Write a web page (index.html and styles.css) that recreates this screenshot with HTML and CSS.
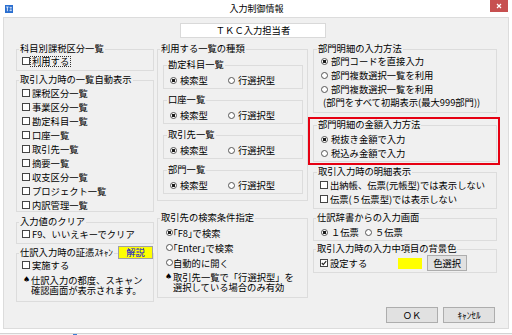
FILE: index.html
```html
<!DOCTYPE html>
<html lang="ja">
<head>
    <meta charset="UTF-8">
    <title>入力制御情報</title>
    <link rel="stylesheet" href="styles.css">
</head>
<body>
<div class="window">
    <div class="titlebar">
        <svg class="app-icon" width="8" height="8" viewBox="0 0 8 8">
            <rect width="8" height="8" fill="#2b6fd0"/>
            <path d="M1.2 2h2.4M2.4 2v4.2M4.6 2.4h2.2M4.9 4h1.8M4.6 5.6h2.2" stroke="#fff" stroke-width="0.8" fill="none"/>
        </svg>
        <div class="title">入力制御情報</div>
        <div class="close-btn">
            <svg width="6" height="6" viewBox="0 0 6 6"><path d="M1 1l4 4M5 1l-4 4" stroke="#fff" stroke-width="1.2"/></svg>
        </div>
    </div>

    <div class="client">
        <div class="user-box">ＴＫＣ入力担当者</div>

        <div class="columns">
            <!-- 左列 -->
            <div class="col col-left">
                <div class="group g-kamoku">
                    <div class="group-title">科目別課税区分一覧</div>
                    <div class="row pad-cb"><span class="cb"></span><span class="focus">利用する</span></div>
                </div>

                <div class="group g-auto">
                    <div class="group-title">取引入力時の一覧自動表示</div>
                    <div class="list">
                        <div class="row pad-cb"><span class="cb"></span>課税区分一覧</div>
                        <div class="row pad-cb"><span class="cb"></span>事業区分一覧</div>
                        <div class="row pad-cb"><span class="cb"></span>勘定科目一覧</div>
                        <div class="row pad-cb"><span class="cb"></span>口座一覧</div>
                        <div class="row pad-cb"><span class="cb"></span>取引先一覧</div>
                        <div class="row pad-cb"><span class="cb"></span>摘要一覧</div>
                        <div class="row pad-cb"><span class="cb"></span>収支区分一覧</div>
                        <div class="row pad-cb"><span class="cb"></span>プロジェクト一覧</div>
                        <div class="row pad-cb"><span class="cb"></span>内訳管理一覧</div>
                    </div>
                </div>

                <div class="group g-clear">
                    <div class="group-title">入力値のクリア</div>
                    <div class="row pad-cb"><span class="cb"></span>F9、いいえキーでクリア</div>
                </div>

                <div class="group g-scan">
                    <div class="group-head">
                        <span class="head-text">仕訳入力時の証憑ｽｷｬﾝ</span>
                        <span class="help-btn">解説</span>
                    </div>
                    <div class="row pad-cb"><span class="cb"></span>実施する</div>
                    <div class="note note-left">
                        <span class="spade">♠</span>
                        <span>仕訳入力の都度、スキャン<br>確認画面が表示されます。</span>
                    </div>
                </div>
            </div>

            <!-- 中央列 -->
            <div class="col col-mid">
                <div class="group g-lists">
                    <div class="group-title">利用する一覧の種類</div>
                    <div class="sub">
                        <div class="group-title">勘定科目一覧</div>
                        <div class="row pair"><span class="rb on"></span>検索型<span class="rb second"></span>行選択型</div>
                    </div>
                    <div class="sub">
                        <div class="group-title">口座一覧</div>
                        <div class="row pair"><span class="rb on"></span>検索型<span class="rb second"></span>行選択型</div>
                    </div>
                    <div class="sub">
                        <div class="group-title">取引先一覧</div>
                        <div class="row pair"><span class="rb on"></span>検索型<span class="rb second"></span>行選択型</div>
                    </div>
                    <div class="sub">
                        <div class="group-title">部門一覧</div>
                        <div class="row pair"><span class="rb on"></span>検索型<span class="rb second"></span>行選択型</div>
                    </div>
                </div>

                <div class="group g-search">
                    <div class="group-title">取引先の検索条件指定</div>
                    <div class="list">
                        <div class="row tall"><span class="rb on"></span>｢F8｣で検索</div>
                        <div class="row tall"><span class="rb"></span>｢Enter｣で検索</div>
                        <div class="row tall"><span class="rb"></span>自動的に開く</div>
                    </div>
                    <div class="note note-mid">
                        <span class="spade">♠</span>
                        <span>取引先一覧で「行選択型」を<br>選択している場合のみ有効</span>
                    </div>
                </div>
            </div>

            <!-- 右列 -->
            <div class="col col-right">
                <div class="group g-bumon">
                    <div class="group-title">部門明細の入力方法</div>
                    <div class="row pad-rb"><span class="rb on"></span>部門コードを直接入力</div>
                    <div class="row pad-rb"><span class="rb"></span>部門複数選択一覧を利用</div>
                    <div class="row pad-rb"><span class="rb"></span>部門複数選択一覧を利用</div>
                    <div class="cont">(部門をすべて初期表示(最大999部門))</div>
                </div>

                <div class="group g-amount">
                    <div class="group-title">部門明細の金額入力方法</div>
                    <div class="list">
                        <div class="row pad-rb"><span class="rb on"></span>税抜き金額で入力</div>
                        <div class="row pad-rb"><span class="rb"></span>税込み金額で入力</div>
                    </div>
                </div>

                <div class="group g-detail">
                    <div class="group-title">取引入力時の明細表示</div>
                    <div class="list">
                        <div class="row pad-cb-r"><span class="cb"></span>出納帳、伝票(元帳型)では表示しない</div>
                        <div class="row pad-cb-r"><span class="cb"></span>伝票(５伝票型)では表示しない</div>
                    </div>
                </div>

                <div class="group g-dict">
                    <div class="group-title">仕訳辞書からの入力画面</div>
                    <div class="row pad-rb"><span class="rb on"></span>１伝票<span class="rb second-s"></span>５伝票</div>
                </div>

                <div class="group g-color">
                    <div class="group-title">取引入力時の入力中項目の背景色</div>
                    <div class="row color-row pad-cb-r">
                        <span class="cb on"><svg width="6" height="6" viewBox="0 0 6 6"><path d="M0.8 3l1.5 1.6L5.2 1.2" stroke="#222" stroke-width="1.1" fill="none"/></svg></span>設定する
                        <span class="swatch"></span>
                        <span class="btn btn-color">色選択</span>
                    </div>
                </div>

                <div class="actions">
                    <span class="btn btn-main">ＯＫ</span>
                    <span class="btn btn-main">ｷｬﾝｾﾙ</span>
                </div>
            </div>
        </div>
    </div>

    <div class="taskbar"><span class="task-mark"></span></div>
</div>
</body>
</html>
```

FILE: styles.css
```css
body {
    margin: 0;
    background: #fff;
    font-family: "Noto Sans CJK JP", "Noto Sans", sans-serif;
    font-size: 9.3px;
    color: #000;
}

.window {
    width: 512px;
    height: 335px;
    overflow: hidden;
}

/* タイトルバー */
.titlebar {
    height: 17px;
    display: flex;
    align-items: flex-start;
}

.app-icon {
    margin: 5px 0 0 5px;
    flex: none;
}

.title {
    flex: 1;
    text-align: center;
    line-height: 17px;
    font-size: 9px;
    padding-left: 10px;
}

.close-btn {
    width: 18px;
    height: 12px;
    margin-right: 4px;
    background: #c75050;
    display: flex;
    align-items: center;
    justify-content: center;
}

/* クライアント領域 */
.client {
    margin-left: 3px;
    width: 506px;
    height: 312px;
    box-sizing: border-box;
    border: 1px solid #dcdcdc;
    background: #f0f0f0;
}

.user-box {
    margin: 5px 0 0 176px;
    width: 146px;
    height: 15px;
    box-sizing: border-box;
    background: #fff;
    border: 1px solid #d9d9d9;
    text-align: center;
    line-height: 13px;
}

.columns {
    display: flex;
    align-items: flex-start;
    margin-top: 11px;
}

.col-left {
    margin-left: 12px;
    width: 138px;
}

.col-mid {
    margin-left: 3px;
    width: 151px;
}

.col-right {
    margin-left: 5px;
    width: 184px;
}

/* グループボックス */
.group {
    border: 1px solid #dcdcdc;
    box-sizing: border-box;
}

.group-title {
    width: fit-content;
    height: 12px;
    line-height: 12px;
    margin: -8px 0 0 2px;
    padding: 0 1px;
    background: #f0f0f0;
    white-space: nowrap;
}

.row {
    display: flex;
    align-items: center;
    height: 14px;
    white-space: nowrap;
}

.row.tall {
    height: 15px;
}

.pad-cb { padding-left: 5px; }
.pad-cb-r { padding-left: 6px; }
.pad-rb { padding-left: 7px; }

.cb {
    flex: none;
    width: 8px;
    height: 8px;
    box-sizing: border-box;
    border: 1px solid #444;
    background: #fff;
    margin-right: 2px;
    display: flex;
    align-items: center;
    justify-content: center;
}

.rb {
    flex: none;
    width: 7px;
    height: 7px;
    box-sizing: border-box;
    border: 1px solid #555;
    border-radius: 50%;
    background: #fff;
    margin-right: 3px;
}

.rb.on {
    background: radial-gradient(circle, #1a1a1a 0 1.5px, #fff 2px);
}

.focus {
    border: 1px dotted #333;
    padding: 0 1px;
    line-height: 9px;
    margin-left: -2px;
}

.note {
    display: flex;
    white-space: nowrap;
    line-height: 10px;
}

.spade {
    flex: none;
    width: 8px;
    font-family: "DejaVu Sans", sans-serif;
    font-size: 8px;
}

/* 左列 */
.g-kamoku { height: 22px; }

.g-auto {
    margin-top: 9px;
    height: 132px;
}

.g-auto .list { padding-top: 1px; }

.g-clear {
    margin-top: 10px;
    height: 22px;
}

.g-scan {
    margin-top: 9px;
    height: 49px;
}

.group-head {
    display: flex;
    justify-content: space-between;
    align-items: flex-start;
    height: 12px;
    margin: -8px 0 0 2px;
}

.head-text {
    line-height: 12px;
    padding: 0 1px;
    background: #f0f0f0;
    white-space: nowrap;
}

.help-btn {
    width: 35px;
    height: 13px;
    box-sizing: border-box;
    border: 1px solid #a0a0a0;
    background: #ffff00;
    color: #0000e0;
    text-align: center;
    line-height: 11px;
}

.note-left {
    margin-top: 3px;
    padding-left: 6px;
}

/* 中央列 */
.g-lists { height: 152px; }

.sub {
    margin: 11px 0 0 5px;
    width: 140px;
    height: 24px;
    border: 1px solid #dcdcdc;
    box-sizing: border-box;
}

.sub .group-title { margin-left: 3px; }

.pair {
    margin-top: 3px;
    padding-left: 6px;
}

.rb.second { margin-left: 20px; }

.g-search {
    margin-top: 17px;
    height: 80px;
}

.g-search .list {
    padding: 2px 0 0 8px;
}

.g-search .rb { margin-right: 0; }

.note-mid {
    margin-top: 2px;
    padding-left: 7px;
}

/* 右列 */
.g-bumon { height: 64px; }

.g-bumon .group-title,
.g-amount .group-title,
.g-detail .group-title { margin-left: 3px; }

.cont {
    margin-top: 1px;
    padding-left: 9px;
    line-height: 10px;
    white-space: nowrap;
}

.g-amount {
    margin-top: 12px;
    height: 37px;
    position: relative;
}

.g-amount .list { padding-top: 2px; }

/* 赤枠の注記 */
.g-amount::after {
    content: "";
    position: absolute;
    left: -6px;
    top: -9px;
    width: 192px;
    height: 48px;
    box-sizing: border-box;
    border: 2px solid #e60012;
}

.g-detail {
    margin-top: 10px;
    height: 37px;
}

.g-detail .list { padding-top: 1px; }

.g-dict {
    margin-top: 9px;
    height: 23px;
}

.g-dict .row { margin-top: 2px; }

.rb.second-s { margin-left: 6px; }

.g-color {
    margin-top: 8px;
    height: 24px;
}

.color-row {
    height: 16px;
    margin-top: 1px;
}

.swatch {
    width: 24px;
    height: 11px;
    margin-left: 31px;
    background: #ffff00;
}

.btn {
    box-sizing: border-box;
    border: 1px solid #adadad;
    background: #e1e1e1;
    text-align: center;
    white-space: nowrap;
}

.btn-color {
    margin-left: 5px;
    width: 40px;
    height: 16px;
    line-height: 14px;
}

.actions {
    display: flex;
    justify-content: flex-end;
    gap: 5px;
    margin-top: 34px;
    padding-right: 2px;
}

.btn-main {
    width: 52px;
    height: 16px;
    line-height: 14px;
}

/* 下端 */
.taskbar {
    margin-top: 4px;
    height: 2px;
    border-top: 1px solid #d4d4d4;
    background: #f4f4f4;
    padding-left: 73px;
}

.task-mark {
    display: block;
    width: 4px;
    height: 2px;
    background: #3c7fd6;
}
```
